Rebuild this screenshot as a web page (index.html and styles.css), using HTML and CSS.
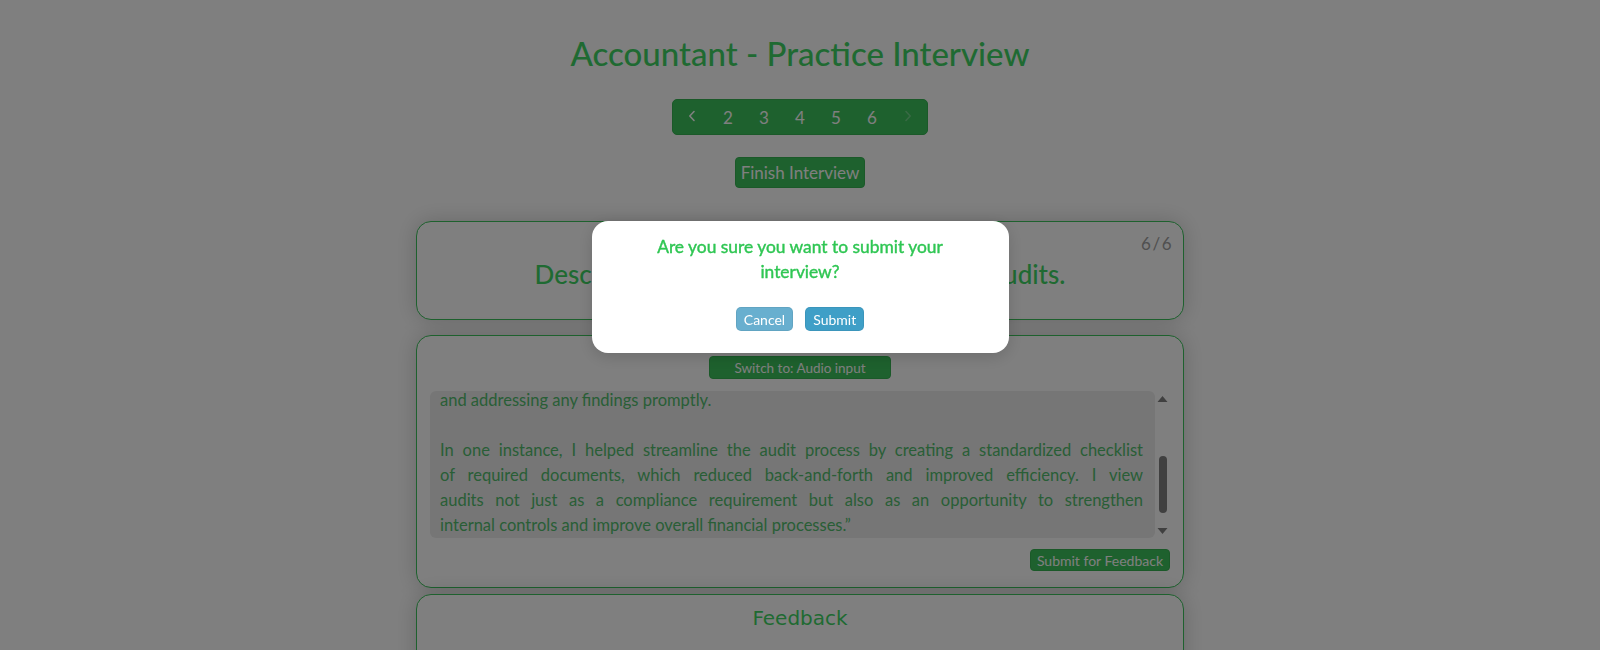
FILE: index.html
```html
<!DOCTYPE html>
<html lang="en">
<head>
<meta charset="utf-8">
<title>Accountant - Practice Interview</title>
<link rel="stylesheet" href="styles.css">
</head>
<body>
<main class="page">
  <h1 class="title">Accountant - Practice Interview</h1>
  <nav class="pager">
    <span class="pager-item"><svg class="chev" viewBox="0 0 8 12" width="8" height="12"><path d="M6 1.5 1.8 6 6 10.5" fill="none" stroke="currentColor" stroke-width="1.6" stroke-linecap="round" stroke-linejoin="round"/></svg></span>
    <span class="pager-item">2</span>
    <span class="pager-item">3</span>
    <span class="pager-item">4</span>
    <span class="pager-item">5</span>
    <span class="pager-item active">6</span>
    <span class="pager-item disabled"><svg class="chev" viewBox="0 0 8 12" width="8" height="12"><path d="M2 1.5 6.2 6 2 10.5" fill="none" stroke="currentColor" stroke-width="1.6" stroke-linecap="round" stroke-linejoin="round"/></svg></span>
  </nav>
  <button class="btn finish">Finish Interview</button>

  <section class="card question-card">
    <div class="counter-row"><span class="counter">6/6</span></div>
    <h2 class="question">Describe your experience with financial audits.</h2>
  </section>

  <section class="card answer-card">
    <button class="btn switch">Switch to: Audio input</button>
    <div class="answer">
      <div class="answer-box">
        <div class="answer-text">
          <p class="para">“In my previous role as a staff accountant, I played a key part in preparing for both internal and external audits. I was responsible for gathering supporting documentation, reconciling general ledger accounts, and preparing detailed schedules for the auditors. I made sure all records were accurate, complete, and well organized before fieldwork began, which helped the process run smoothly. During the audit, I served as the main point of contact for the audit team, answering their questions, providing requested information in a timely manner, <span class="line last">and addressing any findings promptly.</span></p>
          <p class="para"><span class="line">In one instance, I helped streamline the audit process by creating a standardized checklist</span><span class="line">of required documents, which reduced back-and-forth and improved efficiency. I view</span><span class="line">audits not just as a compliance requirement but also as an opportunity to strengthen</span><span class="line last">internal controls and improve overall financial processes.”</span></p>
        </div>
      </div>
      <div class="scrollbar">
        <svg class="sb-arrow" viewBox="0 0 15 15" width="15" height="15"><path d="M2.5 11 7.5 5 12.5 11Z" fill="currentColor"/></svg>
        <div class="sb-track"><div class="sb-thumb"></div></div>
        <svg class="sb-arrow" viewBox="0 0 15 15" width="15" height="15"><path d="M2.5 5 7.5 11 12.5 5Z" fill="currentColor"/></svg>
      </div>
    </div>
    <div class="answer-actions">
      <button class="btn feedback-btn">Submit for Feedback</button>
    </div>
  </section>

  <section class="card feedback-card">
    <h3 class="feedback-title">Feedback</h3>
  </section>
</main>

<div class="overlay">
  <div class="modal">
    <p class="modal-text">Are you sure you want to submit your interview?</p>
    <div class="modal-actions">
      <button class="mbtn cancel">Cancel</button>
      <button class="mbtn submit">Submit</button>
    </div>
  </div>
</div>
</body>
</html>
```

FILE: styles.css
```css
* { box-sizing: border-box; }

html, body {
  margin: 0;
  padding: 0;
  height: 100%;
  overflow: hidden;
  background: #ffffff;
  font-family: Lato, "Noto Sans", sans-serif;
}

.page {
  display: flex;
  flex-direction: column;
  align-items: center;
  padding-top: 33px;
}

.title {
  margin: 0;
  font-size: 33px;
  line-height: 40px;
  font-weight: 500;
  color: #3ed564;
}

.pager {
  display: flex;
  margin-top: 26px;
  padding: 0 1px;
  height: 36px;
  background: #3cc35c;
  border: 1px solid #36b353;
  border-radius: 5px;
}

.pager-item {
  width: 36px;
  display: flex;
  align-items: center;
  justify-content: center;
  color: #ffffff;
  font-size: 17px;
}

.pager-item .chev { display: block; margin-top: -3px; }

.pager-item.disabled { color: rgba(255, 255, 255, 0.28); }

.btn {
  font-family: Lato, "Noto Sans", sans-serif;
  background: #3cc35c;
  color: #ffffff;
  border: 1px solid #36b353;
  border-radius: 4px;
  cursor: pointer;
}

.finish {
  margin-top: 22px;
  height: 31px;
  padding: 0 5px;
  font-size: 17px;
}

.card {
  width: 768px;
  background: #ffffff;
  border: 1px solid #3cc35c;
  border-radius: 15px;
  box-shadow: 0 0 22px rgba(0, 0, 0, 0.18);
}

.question-card {
  margin-top: 33px;
  height: 99px;
  padding: 10px 10px 0;
}

.counter-row {
  display: flex;
  justify-content: flex-end;
}

.counter {
  font-size: 17px;
  line-height: 24px;
  letter-spacing: 1.5px;
  color: #a0a0a0;
}

.question {
  margin: 2px 0 0;
  text-align: center;
  font-size: 26px;
  line-height: 32px;
  font-weight: 500;
  color: #3ed564;
}

.answer-card {
  margin-top: 15px;
  padding: 20px 13px 16px;
  display: flex;
  flex-direction: column;
  align-items: center;
}

.switch {
  height: 23px;
  padding: 0 24px;
  font-size: 13.5px;
}

.answer {
  margin-top: 12px;
  width: 100%;
  height: 147px;
  display: flex;
}

.answer-box {
  flex: 1;
  min-width: 0;
  overflow: hidden;
  display: flex;
  flex-direction: column-reverse;
  background: #ececec;
  border-radius: 6px;
}

.answer-text {
  padding: 6px 12px 0 10px;
  font-size: 16.5px;
  line-height: 25px;
  text-align: justify;
  color: #52bd6c;
}

.para { margin: 0; }
.para + .para { margin-top: 25px; }

.line {
  display: block;
  text-align: justify;
  text-align-last: justify;
}

.line.last { text-align-last: left; }

.scrollbar {
  width: 15px;
  display: flex;
  flex-direction: column;
  color: #808080;
}

.sb-arrow { display: block; flex: none; }

.sb-track {
  flex: 1;
  display: flex;
  flex-direction: column;
  justify-content: flex-end;
  align-items: center;
  padding-bottom: 10px;
}

.sb-thumb {
  width: 8px;
  height: 57px;
  border-radius: 4px;
  background: #808080;
}

.answer-actions {
  width: 100%;
  display: flex;
  justify-content: flex-end;
  margin-top: 11px;
}

.feedback-btn {
  height: 22px;
  padding: 0 6px;
  font-size: 14px;
}

.feedback-card {
  margin-top: 6px;
  min-height: 200px;
  padding-top: 10px;
}

.feedback-title {
  margin: 0;
  text-align: center;
  font-family: "DejaVu Sans", sans-serif;
  font-size: 20px;
  font-weight: 400;
  line-height: 26px;
  color: #3ed564;
}

.overlay {
  position: fixed;
  inset: 0;
  background: rgba(0, 0, 0, 0.5);
  display: flex;
  justify-content: center;
  align-items: flex-start;
  padding-top: 221px;
}

.modal {
  width: 417px;
  background: #ffffff;
  border-radius: 16px;
  padding: 13px 56px 22px;
  box-shadow: 0 4px 16px rgba(0, 0, 0, 0.15);
  text-align: center;
}

.modal-text {
  margin: 0 0 23px;
  font-size: 17.4px;
  line-height: 25px;
  font-weight: 400;
  -webkit-text-stroke: 0.4px currentColor;
  color: #2fc653;
}

.modal-actions {
  display: flex;
  justify-content: center;
  gap: 12px;
}

.mbtn {
  font-family: Lato, "Noto Sans", sans-serif;
  font-size: 14px;
  height: 24px;
  padding: 0 7px;
  color: #ffffff;
  border: 1px solid rgba(0, 0, 0, 0.06);
  border-radius: 5px;
}

.cancel { background: #68afcf; }
.submit { background: #3f9fc7; }
```
